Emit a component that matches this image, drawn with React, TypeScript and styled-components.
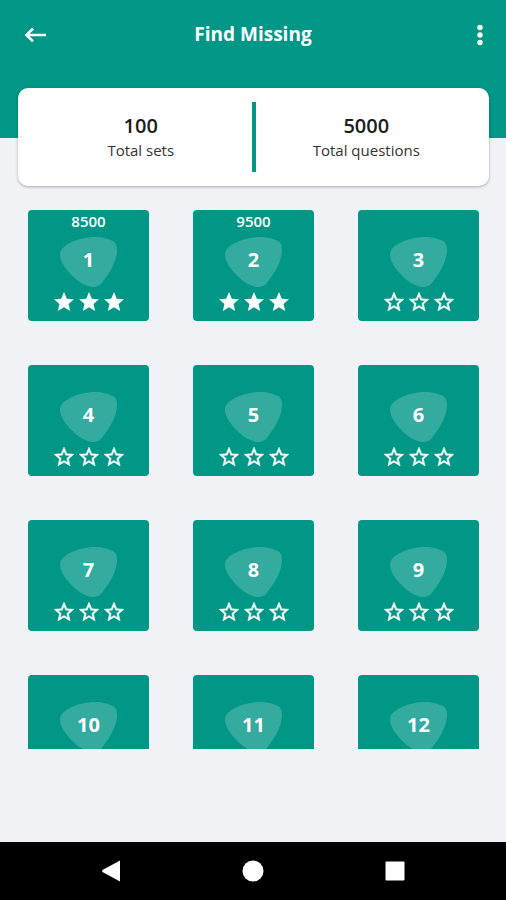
import React from 'react';
import styled, { createGlobalStyle } from 'styled-components';

const TEAL = '#009787';

const GlobalStyle = createGlobalStyle`
  *, *::before, *::after { box-sizing: border-box; }
  body {
    margin: 0;
    background: #f0f2f6;
    font-family: 'Open Sans', 'Noto Sans', sans-serif;
  }
  button {
    margin: 0;
    padding: 0;
    border: 0;
    background: none;
    color: inherit;
    font: inherit;
    cursor: pointer;
  }
  svg { display: block; }
`;

const Screen = styled.div`
  display: flex;
  flex-direction: column;
  height: 100vh;
`;

const Header = styled.header`
  flex: none;
  height: 138px;
  background: ${TEAL};
  color: #fff;
`;

const Toolbar = styled.div`
  display: grid;
  grid-template-columns: 48px 1fr 48px;
  align-items: center;
  height: 68px;
  padding: 0 11px;
`;

const IconButton = styled.button<{ $end?: boolean }>`
  display: flex;
  align-items: center;
  justify-content: ${(p) => (p.$end ? 'flex-end' : 'flex-start')};
  height: 48px;
  padding: 2px 12px 0;
`;

const Title = styled.h1`
  margin: 0;
  text-align: center;
  font-size: 19px;
  line-height: 28px;
  font-weight: 700;
`;

const Summary = styled.section`
  flex: none;
  display: grid;
  grid-template-columns: 1fr 4px 1fr;
  align-items: center;
  height: 98px;
  margin: -50px 17px 0 18px;
  border-radius: 10px;
  background: #fff;
  box-shadow: 0 1px 3px rgba(0, 0, 0, 0.3);
`;

const Divider = styled.span`
  height: 70px;
  background: ${TEAL};
`;

const Stat = styled.div`
  padding: 2px 0 0 12px;
  text-align: center;
  color: #1c1c1c;

  &:last-child { padding: 2px 12px 0 0; }
`;

const StatValue = styled.div`
  font-size: 20px;
  line-height: 24px;
  font-weight: 600;
`;

const StatLabel = styled.div`
  font-size: 15px;
  line-height: 24px;
  color: #333;
`;

const Levels = styled.main`
  flex: 1;
  min-height: 0;
  margin: 24px 27px 0 28px;
  overflow: hidden;
`;

const LevelGrid = styled.div`
  display: grid;
  grid-template-columns: repeat(3, 1fr);
  gap: 44px;
`;

const LevelCard = styled.button`
  display: grid;
  grid-template-rows: 27px 50px 1fr;
  justify-items: center;
  height: 111px;
  border-radius: 4px;
  background: ${TEAL};
  color: #fff;
`;

const Score = styled.span`
  font-size: 15px;
  line-height: 22px;
  font-weight: 600;
`;

const Badge = styled.span`
  display: grid;
  place-items: center;

  > * { grid-area: 1 / 1; }
`;

const LevelNumber = styled.span`
  font-size: 20px;
  line-height: 24px;
  font-weight: 700;
  padding-bottom: 4px;
`;

const Stars = styled.span`
  display: flex;
  gap: 1px;
  padding-top: 3px;
`;

const BottomSpace = styled.div`
  flex: none;
  height: 93px;
`;

const SystemBar = styled.nav`
  flex: none;
  display: flex;
  align-items: center;
  justify-content: center;
  gap: 94px;
  height: 58px;
  background: #000;
  color: #fff;
`;

const SystemButton = styled.button`
  display: grid;
  place-items: center;
  width: 48px;
  height: 48px;
`;

const STAR =
  'M12 17.27 18.18 21 16.54 13.97 22 9.24 14.81 8.63 12 2 9.19 8.63 2 9.24 7.46 13.97 5.82 21Z';
const STAR_HOLE =
  'M12 15.4 8.24 17.67 9.24 13.39 5.92 10.51 10.3 10.13 12 6.1 13.71 10.14 18.09 10.52 14.77 13.4 15.77 17.68Z';

function Star({ filled }: { filled: boolean }) {
  return (
    <svg width="24" height="24" viewBox="0 0 24 24" fill="currentColor" aria-hidden="true">
      {filled ? (
        <path d={STAR} />
      ) : (
        <path fillRule="evenodd" stroke="currentColor" strokeWidth="0.4" d={STAR + STAR_HOLE} />
      )}
    </svg>
  );
}

function Shield() {
  return (
    <svg width="57" height="50" viewBox="0 0 57 50" aria-hidden="true">
      <path
        fill="#fff"
        fillOpacity="0.2"
        d="M0 18C0 13 3 10 8 7C17 2 26 0 35 0C43 0 48 2 53 4C56 6 57 8 57 13C57 23 51 34 44 43C41 48 38 50 33 50C29 50 25 48 21 46C11 39 0 27 0 18Z"
      />
    </svg>
  );
}

interface Level {
  id: number;
  score?: number;
  stars: number;
}

const levels: Level[] = Array.from({ length: 12 }, (_, i) => ({ id: i + 1, stars: 0 }));
levels[0] = { id: 1, score: 8500, stars: 3 };
levels[1] = { id: 2, score: 9500, stars: 3 };

export default function App() {
  return (
    <>
      <GlobalStyle />
      <Screen>
        <Header>
          <Toolbar>
            <IconButton aria-label="Back">
              <svg width="24" height="16" viewBox="0 0 24 16" fill="none" stroke="currentColor" strokeWidth="2.6">
                <path d="M23 8H4M10 1.6 3.4 8l6.6 6.4" />
              </svg>
            </IconButton>
            <Title>Find Missing</Title>
            <IconButton $end aria-label="More options">
              <svg width="6" height="22" viewBox="0 0 6 22" fill="currentColor">
                <circle cx="3" cy="3.5" r="2.7" />
                <circle cx="3" cy="11" r="2.7" />
                <circle cx="3" cy="18.5" r="2.7" />
              </svg>
            </IconButton>
          </Toolbar>
        </Header>
        <Summary>
          <Stat>
            <StatValue>100</StatValue>
            <StatLabel>Total sets</StatLabel>
          </Stat>
          <Divider />
          <Stat>
            <StatValue>5000</StatValue>
            <StatLabel>Total questions</StatLabel>
          </Stat>
        </Summary>
        <Levels>
          <LevelGrid>
            {levels.map((level) => (
              <LevelCard key={level.id}>
                <Score>{level.score}</Score>
                <Badge>
                  <Shield />
                  <LevelNumber>{level.id}</LevelNumber>
                </Badge>
                <Stars>
                  {[1, 2, 3].map((n) => (
                    <Star key={n} filled={n <= level.stars} />
                  ))}
                </Stars>
              </LevelCard>
            ))}
          </LevelGrid>
        </Levels>
        <BottomSpace />
        <SystemBar>
          <SystemButton aria-label="Back">
            <svg width="20" height="22" viewBox="0 0 20 22" fill="currentColor">
              <path d="M19 0.5V21.5L1.5 12Q0.5 11 1.5 10Z" />
            </svg>
          </SystemButton>
          <SystemButton aria-label="Home">
            <svg width="22" height="22" viewBox="0 0 22 22" fill="currentColor">
              <circle cx="11" cy="11" r="10.5" />
            </svg>
          </SystemButton>
          <SystemButton aria-label="Recent apps">
            <svg width="20" height="20" viewBox="0 0 20 20" fill="currentColor">
              <rect x="0.5" y="0.5" width="19" height="19" rx="1" />
            </svg>
          </SystemButton>
        </SystemBar>
      </Screen>
    </>
  );
}
